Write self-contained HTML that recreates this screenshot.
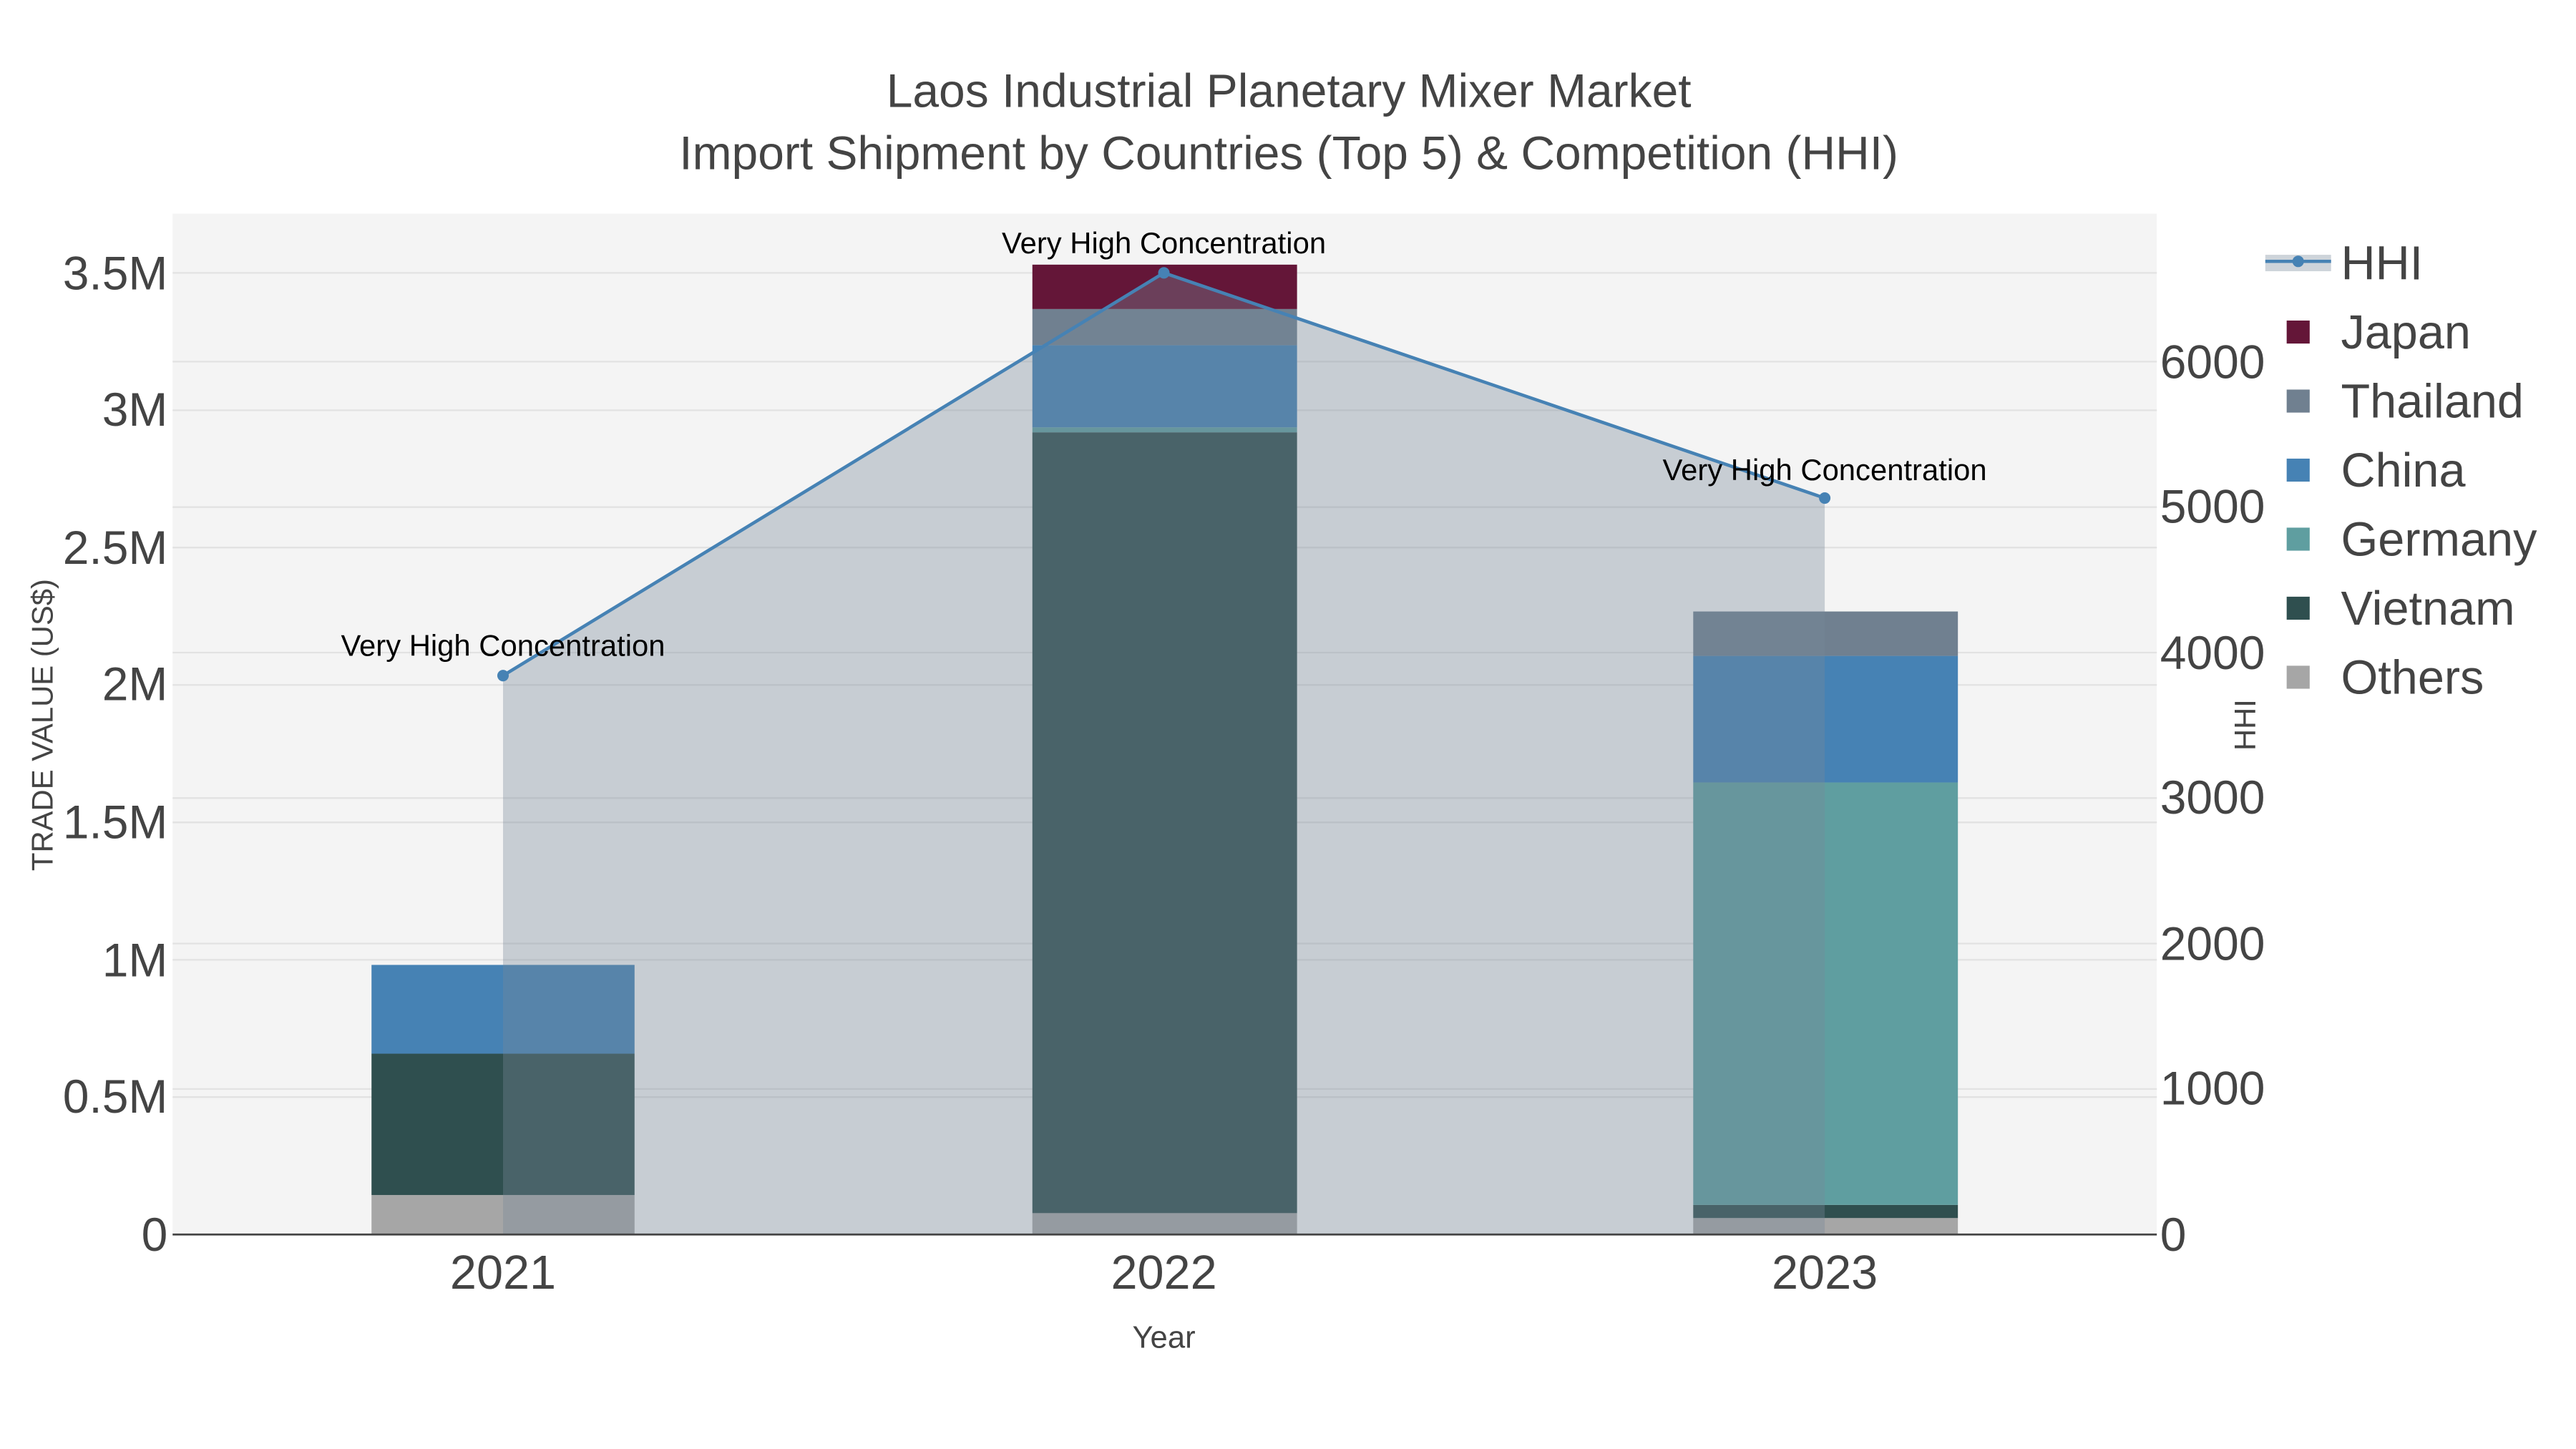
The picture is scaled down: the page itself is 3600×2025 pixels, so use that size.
<!DOCTYPE html>
<html><head><meta charset="utf-8"><style>
html,body{margin:0;padding:0;background:#fff;}
svg{display:block;}
text{font-family:"Liberation Sans",Arial,sans-serif;}
</style></head><body>
<svg width="3600" height="2025" viewBox="0 0 1567 881.5" preserveAspectRatio="none" xmlns="http://www.w3.org/2000/svg">
<rect x="0" y="0" width="1567" height="881.5" fill="#fff"/>
<rect x="105" y="130" width="1207" height="621" fill="#f4f4f4"/>
<g stroke="#e2e2e2" stroke-width="1">
<line x1="105" x2="1312" y1="667.4" y2="667.4"/><line x1="105" x2="1312" y1="583.9" y2="583.9"/>
<line x1="105" x2="1312" y1="500.3" y2="500.3"/><line x1="105" x2="1312" y1="416.7" y2="416.7"/>
<line x1="105" x2="1312" y1="333.1" y2="333.1"/><line x1="105" x2="1312" y1="249.6" y2="249.6"/>
<line x1="105" x2="1312" y1="166" y2="166"/>
<line x1="105" x2="1312" y1="662.5" y2="662.5"/><line x1="105" x2="1312" y1="574" y2="574"/>
<line x1="105" x2="1312" y1="485.5" y2="485.5"/><line x1="105" x2="1312" y1="397" y2="397"/>
<line x1="105" x2="1312" y1="308.5" y2="308.5"/><line x1="105" x2="1312" y1="220" y2="220"/>
</g>
<rect x="226" y="727" width="160" height="24" fill="#a6a6a6"/>
<rect x="226" y="641" width="160" height="86" fill="#2f4f4f"/>
<rect x="226" y="587" width="160" height="54" fill="#4682b4"/>
<rect x="628" y="738" width="161" height="13" fill="#a6a6a6"/>
<rect x="628" y="263" width="161" height="475" fill="#2f4f4f"/>
<rect x="628" y="260" width="161" height="3" fill="#5f9ea0"/>
<rect x="628" y="210" width="161" height="50" fill="#4682b4"/>
<rect x="628" y="188" width="161" height="22" fill="#708090"/>
<rect x="628" y="161" width="161" height="27" fill="#641638"/>
<rect x="1030" y="741" width="161" height="10" fill="#a6a6a6"/>
<rect x="1030" y="733" width="161" height="8" fill="#2f4f4f"/>
<rect x="1030" y="476" width="161" height="257" fill="#5f9ea0"/>
<rect x="1030" y="399" width="161" height="77" fill="#4682b4"/>
<rect x="1030" y="372" width="161" height="27" fill="#708090"/>
<polygon points="306,411 708,166 1110,303 1110,751 306,751" fill="rgba(119,136,153,0.36)"/>
<line x1="105" x2="1312" y1="751" y2="751" stroke="#444" stroke-width="1.2"/>
<polyline points="306,411 708,166 1110,303" fill="none" stroke="#4682b4" stroke-width="2"/>
<circle cx="306" cy="411" r="3.5" fill="#4682b4"/><circle cx="708" cy="166" r="3.5" fill="#4682b4"/><circle cx="1110" cy="303" r="3.5" fill="#4682b4"/>
<g font-size="18.2" fill="#000" text-anchor="middle">
<text x="306" y="399">Very High Concentration</text>
<text x="708" y="154">Very High Concentration</text>
<text x="1110" y="292">Very High Concentration</text>
</g>
<g fill="#444" text-anchor="middle" font-size="28.7">
<text x="784" y="65">Laos Industrial Planetary Mixer Market</text>
<text x="784" y="103">Import Shipment by Countries (Top 5) &amp; Competition (HHI)</text>
</g>
<g fill="#444" font-size="28.7" text-anchor="end">
<text x="102" y="761">0</text><text x="102" y="677">0.5M</text><text x="102" y="594">1M</text>
<text x="102" y="510">1.5M</text><text x="102" y="426">2M</text><text x="102" y="343">2.5M</text>
<text x="102" y="259">3M</text><text x="102" y="176">3.5M</text>
</g>
<g fill="#444" font-size="28.7" text-anchor="start">
<text x="1314" y="761">0</text><text x="1314" y="672">1000</text><text x="1314" y="584">2000</text>
<text x="1314" y="495">3000</text><text x="1314" y="407">4000</text><text x="1314" y="318">5000</text>
<text x="1314" y="230">6000</text>
</g>
<g fill="#444" font-size="29" text-anchor="middle">
<text x="306" y="784">2021</text><text x="708" y="784">2022</text><text x="1110" y="784">2023</text>
</g>
<text x="708" y="820" fill="#444" font-size="19" text-anchor="middle">Year</text>
<text transform="translate(32,441) rotate(-90)" fill="#444" font-size="18.2" text-anchor="middle">TRADE VALUE (US$)</text>
<text transform="translate(1372,441) rotate(-90)" fill="#444" font-size="18.2" text-anchor="middle">HHI</text>
<rect x="1378" y="155" width="40" height="10" fill="rgba(119,136,153,0.36)"/>
<line x1="1378" x2="1418" y1="159" y2="159" stroke="#4682b4" stroke-width="2"/>
<circle cx="1398" cy="159" r="3.5" fill="#4682b4"/>
<g font-size="29" fill="#444">
<text x="1424" y="170">HHI</text>
<text x="1424" y="212">Japan</text><text x="1424" y="254">Thailand</text><text x="1424" y="296">China</text>
<text x="1424" y="338">Germany</text><text x="1424" y="380">Vietnam</text><text x="1424" y="422">Others</text>
</g>
<rect x="1391" y="195" width="14" height="14" fill="#641638"/>
<rect x="1391" y="237" width="14" height="14" fill="#708090"/>
<rect x="1391" y="279" width="14" height="14" fill="#4682b4"/>
<rect x="1391" y="321" width="14" height="14" fill="#5f9ea0"/>
<rect x="1391" y="363" width="14" height="14" fill="#2f4f4f"/>
<rect x="1391" y="405" width="14" height="14" fill="#a6a6a6"/>
</svg>
</body></html>
